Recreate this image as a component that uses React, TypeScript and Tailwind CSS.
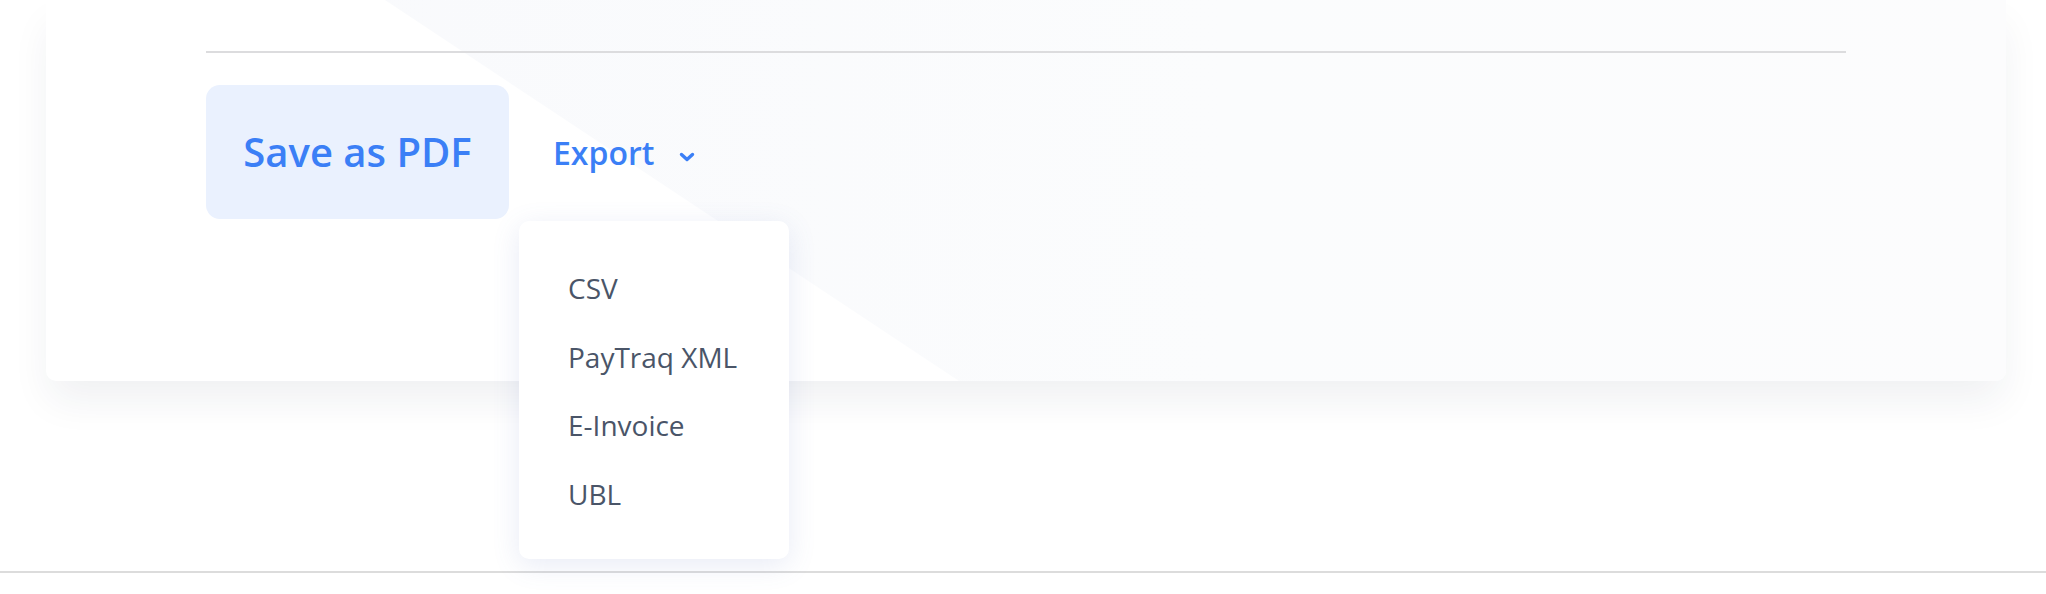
import { useState } from "react"

const formats = ["CSV", "PayTraq XML", "E-Invoice", "UBL"]

const Chevron = () => (
  <svg width="16" height="10" viewBox="0 0 16 10" fill="none" className="mt-[8px]">
    <path d="M2.5 2.5 8 7.5l5.5-5" stroke="currentColor" strokeWidth="3.4" strokeLinecap="round" strokeLinejoin="round" />
  </svg>
)

export default function App() {
  const [open] = useState(true)

  return (
    <div className="h-[594px] bg-white font-['Open_Sans',sans-serif] overflow-hidden">
      <div className="px-[46px] pr-[40px] pb-[190px]">
        <div className="relative h-[381px] rounded-b-[10px] bg-white shadow-[0_22px_40px_-4px_rgba(30,41,70,0.07)]">
          {/* diagonal tint */}
          <div className="absolute inset-0 rounded-b-[10px] bg-[linear-gradient(90deg,#f8f9fc,#fbfcfd_60%,#fcfcfd)] [clip-path:polygon(339px_0,100%_0,100%_100%,913px_100%)]" />

          <div className="relative px-[160px] pt-[51px]">
            <div className="h-[2px] bg-[#dcdcde]" />

            <div className="mt-[32px] flex gap-[10px]">
              <button className="h-[134px] w-[303px] rounded-[14px] bg-[#eaf1fe] text-[40px] font-semibold text-[#3b7ff6]">
                Save as PDF
              </button>

              <div className="relative">
                <button className="flex h-[134px] items-center gap-[25px] px-[34px] pt-[2px] text-[32px] font-semibold text-[#3b7ff6]">
                  Export
                  <Chevron />
                </button>

                {open && (
                  <ul className="absolute left-0 top-[136px] w-[270px] rounded-[10px] bg-white pt-[33px] pb-[31px] pl-[49px] shadow-[0_6px_28px_rgba(90,110,190,0.14)]">
                    {formats.map((f) => (
                      <li key={f} className="flex h-[68.5px] items-center text-[28px] leading-[40px] text-[#4a5568]">
                        {f}
                      </li>
                    ))}
                  </ul>
                )}
              </div>
            </div>
          </div>
        </div>
      </div>

      <div className="h-[2px] bg-[#dcdcdc]" />
    </div>
  )
}
